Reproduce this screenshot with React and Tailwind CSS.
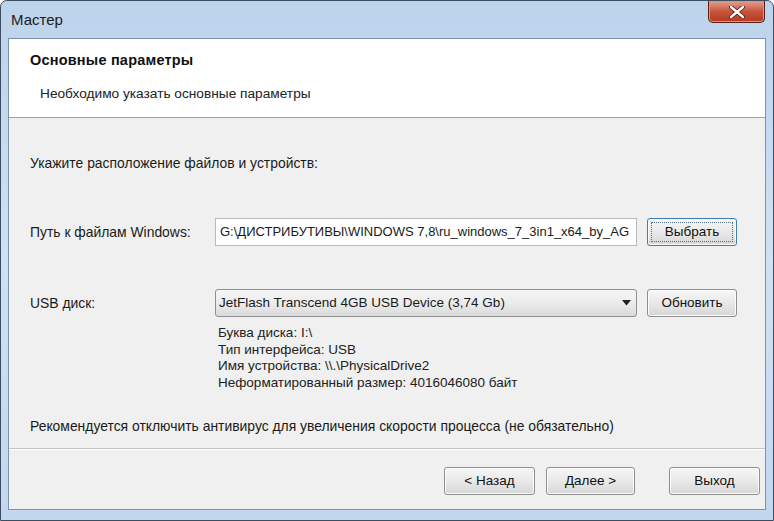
import React from 'react';

const font = { fontFamily: '"Liberation Sans", Arial, sans-serif' };

const WinButton = ({ children, focused, className = '' }) => (
  <div
    className={`flex items-center justify-center rounded-[3px] border ${
      focused ? 'border-[#3c7fb1]' : 'border-[#8e8f8f]'
    } bg-gradient-to-b from-[#f6f6f6] via-[#e9e9e9] to-[#d6d6d6] text-[13.5px] text-[#111] shadow-[inset_0_0_0_1px_#fcfcfc] ${className}`}
  >
    {focused ? (
      <div className="flex h-[calc(100%-6px)] w-[calc(100%-6px)] items-center justify-center border border-dotted border-[#5b6f82]">
        {children}
      </div>
    ) : (
      children
    )}
  </div>
);

const App = () => {
  return (
    <div
      style={font}
      className="flex h-[521px] w-[774px] flex-col rounded-t-[7px] border border-[#3d4d60] bg-gradient-to-b from-[#bcd3ec] via-[#cfe1f4] to-[#c2d7ee] px-[7px] pb-[10px]"
    >
      {/* title bar */}
      <div className="flex h-[37px] shrink-0 items-start justify-between">
        <span className="pl-[3px] pt-[8px] text-[15px] text-[#1b1b1b]">Мастер</span>
        <div className="mr-[1px] flex h-[22px] w-[57px] items-center justify-center rounded-b-[5px] border border-t-0 border-[#5b1f16] bg-gradient-to-b from-[#e3a08f] via-[#c8523a] to-[#b13a22] shadow-[inset_0_0_0_1px_#e9907c]">
          <svg width="16" height="12" viewBox="0 0 16 12">
            <path
              d="M2 1 L14 11 M14 1 L2 11"
              stroke="#4a1a10"
              strokeWidth="4"
              strokeLinecap="round"
            />
            <path
              d="M2 1 L14 11 M14 1 L2 11"
              stroke="#ffffff"
              strokeWidth="2.4"
              strokeLinecap="round"
            />
          </svg>
        </div>
      </div>

      {/* client area */}
      <div className="flex flex-1 flex-col border border-[#7d93ab] bg-[#f0f0f0]">
        <div className="h-[79px] shrink-0 border-b border-[#a0a0a0] bg-white pl-[21px]">
          <div className="pt-[11px] text-[14.5px] font-bold tracking-[0.2px] text-[#111]">
            Основные параметры
          </div>
          <div className="pl-[10px] pt-[12px] text-[13.7px] text-[#222]">
            Необходимо указать основные параметры
          </div>
        </div>

        <div className="flex flex-1 flex-col pl-[21px] text-[13.9px] text-[#1a1a1a]">
          <div className="mt-[37px] leading-[17px]">Укажите расположение файлов и устройств:</div>

          <div className="mt-[46px] flex items-center">
            <span className="w-[185px]">Путь к файлам Windows:</span>
            <div className="flex h-[28px] w-[422px] items-center overflow-hidden whitespace-nowrap border border-[#b5b9c0] bg-white pl-[4px] text-[13px]">
              G:\ДИСТРИБУТИВЫ\WINDOWS 7,8\ru_windows_7_3in1_x64_by_AG
            </div>
            <WinButton focused className="ml-[10px] h-[28px] w-[90px]">
              Выбрать
            </WinButton>
          </div>

          <div className="mt-[43px] flex items-center">
            <span className="w-[185px]">USB диск:</span>
            <div className="flex h-[28px] w-[422px] items-center justify-between rounded-[3px] border border-[#8e8f8f] bg-gradient-to-b from-[#f6f6f6] via-[#ececec] to-[#dadada] pl-[3px] pr-[5px] text-[13.5px]">
              <span>JetFlash Transcend 4GB USB Device (3,74 Gb)</span>
              <svg width="9" height="6" viewBox="0 0 9 6">
                <path d="M0 0 H9 L4.5 5.5 Z" fill="#222" />
              </svg>
            </div>
            <WinButton className="ml-[10px] h-[28px] w-[90px]">Обновить</WinButton>
          </div>

          <div className="ml-[188px] mt-[8px] flex flex-col text-[13.5px] leading-[16.7px] text-[#222]">
            <span>Буква диска: I:\</span>
            <span>Тип интерфейса: USB</span>
            <span>Имя устройства: \\.\PhysicalDrive2</span>
            <span>Неформатированный размер: 4016046080 байт</span>
          </div>

          <div className="mt-[26px] leading-[17px]">
            Рекомендуется отключить антивирус для увеличения скорости процесса (не обязательно)
          </div>
        </div>

        <div className="h-[61px] shrink-0 border-t border-[#c4c4c4] shadow-[inset_0_1px_0_#ffffff]">
          <div className="flex justify-end pr-[5px] pt-[18px]">
            <WinButton className="h-[28px] w-[91px]">&lt; Назад</WinButton>
            <WinButton className="ml-[11px] h-[28px] w-[89px]">Далее &gt;</WinButton>
            <WinButton className="ml-[34px] h-[28px] w-[91px]">Выход</WinButton>
          </div>
        </div>
      </div>
    </div>
  );
};

export default App;
